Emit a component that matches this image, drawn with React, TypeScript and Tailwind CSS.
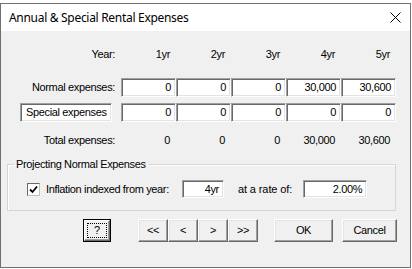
import React from "react";

const sunken =
  "bg-white border-t border-l border-b border-r border-t-[#a0a0a0] border-l-[#a0a0a0] border-b-white border-r-white shadow-[inset_1px_1px_0_#696969,inset_-1px_-1px_0_#e3e3e3]";

function Input({ value, w = "w-[55px]", h = "h-[19px]" }: { value: string; w?: string; h?: string }) {
  return (
    <div className={`${sunken} ${w} ${h} flex items-center justify-end pr-[4px] box-border`}>
      <span>{value}</span>
    </div>
  );
}

function Btn({ children, w, def = false }: { children: React.ReactNode; w: string; def?: boolean }) {
  if (def) {
    return (
      <div className={`${w} h-[23px] border border-black box-border`}>
        <div className="w-full h-full bg-[#f0f0f0] border-t border-l border-t-white border-l-white border-b border-r border-b-[#696969] border-r-[#696969] shadow-[inset_-1px_-1px_0_#a0a0a0] box-border p-[2px]">
          <div className="w-full h-full border border-dotted border-black flex items-center justify-center box-border">
            {children}
          </div>
        </div>
      </div>
    );
  }
  return (
    <div
      className={`${w} h-[23px] bg-[#f0f0f0] border-t border-l border-t-white border-l-white border-b border-r border-b-[#696969] border-r-[#696969] shadow-[inset_-1px_-1px_0_#a0a0a0,inset_1px_1px_0_#e3e3e3] box-border flex items-center justify-center`}
    >
      {children}
    </div>
  );
}

export default function App() {
  const years = ["1yr", "2yr", "3yr", "4yr", "5yr"];
  const normal = ["0", "0", "0", "30,000", "30,600"];
  const special = ["0", "0", "0", "0", "0"];
  const total = ["0", "0", "0", "30,000", "30,600"];
  return (
    <div
      className="w-[412px] h-[269px] bg-white overflow-hidden text-[11px] leading-[13px] tracking-[-0.35px] whitespace-nowrap text-black"
      style={{ fontFamily: '"Liberation Sans", Arial, sans-serif' }}
    >
      <div className="h-[3px] bg-white" />
      <div className="w-[411px] h-[265px] border border-[#707070] box-border flex flex-col">
        {/* Title bar */}
        <div className="h-[27px] bg-white flex items-center justify-between shrink-0">
          <span
            className="ml-[8px] text-[12px] leading-[16px] tracking-[-0.3px] text-black"
            style={{ fontFamily: '"Noto Sans", "Segoe UI", sans-serif' }}
          >
            Annual &amp; Special Rental Expenses
          </span>
          <svg width="11" height="11" viewBox="0 0 11 11" className="mr-[9px]">
            <path d="M0.5 0.5 L10.5 10.5 M10.5 0.5 L0.5 10.5" stroke="#000" strokeWidth="1" />
          </svg>
        </div>
        {/* Body */}
        <div className="flex-1 bg-[#f0f0f0] flex flex-col">
          {/* Year row */}
          <div className="flex h-[16px] mt-[15px] items-center">
            <div className="w-[120px] text-right pr-[6px]">Year:</div>
            {years.map((y) => (
              <div key={y} className="w-[55px] text-right pr-[6px]">{y}</div>
            ))}
          </div>
          {/* Normal row */}
          <div className="flex h-[19px] mt-[16px] items-center">
            <div className="w-[120px] text-right pr-[6px]">Normal expenses:</div>
            {normal.map((v, i) => (
              <Input key={i} value={v} />
            ))}
          </div>
          {/* Special row */}
          <div className="flex h-[19px] mt-[6px] items-center">
            <div className="w-[120px] flex pl-[19px]">
              <div className={`${sunken} w-[92px] h-[19px] flex items-center pl-[5px] box-border`}>Special expenses</div>
            </div>
            {special.map((v, i) => (
              <Input key={i} value={v} />
            ))}
          </div>
          {/* Total row */}
          <div className="flex h-[16px] mt-[10px] items-center">
            <div className="w-[120px] text-right pr-[6px]">Total expenses:</div>
            {total.map((v, i) => (
              <div key={i} className="w-[55px] text-right pr-[6px]">{v}</div>
            ))}
          </div>
          {/* Group box */}
          <fieldset className="ml-[6px] w-[389px] h-[53px] mt-[10px] border border-[#d5d5d5] shadow-[inset_1px_1px_0_#fff] box-border px-0">
            <legend className="ml-[6px] px-[2px] leading-[13px]">Projecting Normal Expenses</legend>
            <div className="flex items-center h-[18px] mt-[9px]">
              <div className="ml-[19px] w-[13px] h-[13px] bg-white border border-t-[#696969] border-l-[#696969] border-b-[#c0c0c0] border-r-[#c0c0c0] box-border flex items-center justify-center">
                <svg width="9" height="9" viewBox="0 0 9 9">
                  <path d="M1 4.5 L3.5 7 L8 1.5" stroke="#000" strokeWidth="1.8" fill="none" />
                </svg>
              </div>
              <span className="ml-[6px]">Inflation indexed from year:</span>
              <div className="ml-[13px]">
                <Input value="4yr" w="w-[42px]" h="h-[18px]" />
              </div>
              <span className="ml-[14px] tracking-[-0.1px]">at a rate of:</span>
              <div className="ml-[11px]">
                <Input value="2.00%" w="w-[64px]" h="h-[18px]" />
              </div>
            </div>
          </fieldset>
          {/* Buttons */}
          <div className="flex mt-[8px] items-center">
            <div className="ml-[82px]">
              <Btn w="w-[28px]" def>?</Btn>
            </div>
            <div className="ml-[27px] flex">
              <Btn w="w-[30px]">&lt;&lt;</Btn>
              <Btn w="w-[30px]">&lt;</Btn>
              <Btn w="w-[30px]">&gt;</Btn>
              <Btn w="w-[30px]">&gt;&gt;</Btn>
            </div>
            <div className="ml-[16px]">
              <Btn w="w-[59px]">OK</Btn>
            </div>
            <div className="ml-[9px]">
              <Btn w="w-[55px]">Cancel</Btn>
            </div>
          </div>
        </div>
      </div>
    </div>
  );
}
